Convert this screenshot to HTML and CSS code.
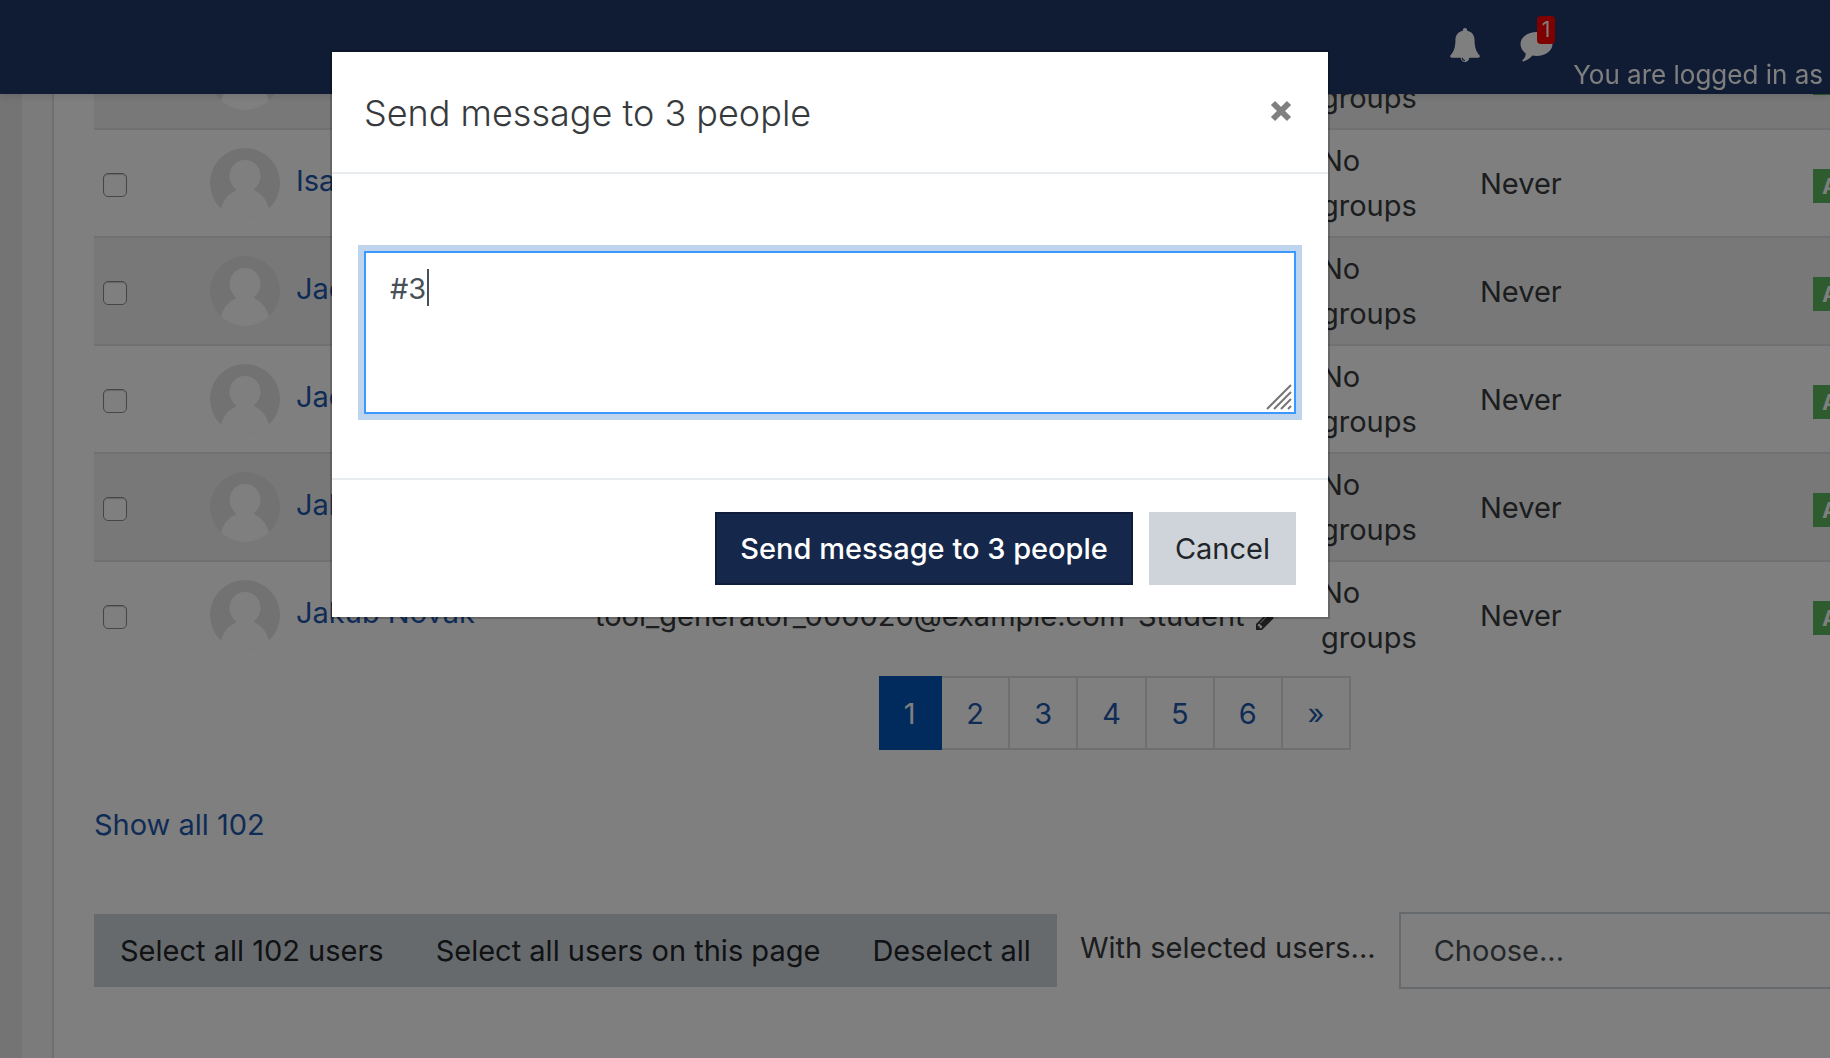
FILE: index.html
```html
<!DOCTYPE html>
<html lang="en">
<head>
    <meta charset="UTF-8">
    <meta name="viewport" content="width=device-width, initial-scale=1.0">
    <title>Participants</title>
    <link rel="stylesheet" href="styles.css">
</head>
<body>

<svg class="sprite" aria-hidden="true">
    <symbol id="avatar" viewBox="0 0 70 70">
        <clipPath id="round"><circle cx="35" cy="35" r="35"/></clipPath>
        <g clip-path="url(#round)">
            <rect width="70" height="70" fill="#e4e4e4"/>
            <path d="M35 12c9 0 15.500 7 15.500 16 0 6-3 10-7 14 9 4 14 11 16 21l-2 7H12l-1.500-7c2-10 7-17 16-21-4-4-7-8-7-14 0-9 6.500-16 15.500-16z" fill="#fff"/>
        </g>
    </symbol>
    <symbol id="pencil" viewBox="0 0 1536 1536">
        <path d="M363 1408l91-91-235-235-91 91v107h128v128zM886 480q0-22-22-22-10 0-17 7l-542 542q-7 7-7 17 0 22 22 22 10 0 17-7l542-542q7-7 7-17zM832 288l416 416-832 832H0v-416zM1515 384q0 53-37 90l-166 166-416-416 166-165q36-38 90-38 53 0 91 38l235 234q37 39 37 91z"/>
    </symbol>
</svg>

<header class="navbar">
    <a href="#" class="nav-icon" aria-label="Notifications">
        <svg class="bell" viewBox="0 0 28 32"><path d="M14 0c1.300 0 2 .8 2 2v.7c4.500.8 7 4.300 7 8.800 0 7.500 2 11.500 5 14.500 0 1.300-.9 2-2 2h-8c0 2.200-1.800 4-4 4s-4-1.800-4-4H2c-1.100 0-2-.7-2-2 3-3 5-7 5-14.500 0-4.500 2.500-8 7-8.800V2c0-1.200.7-2 2-2z" fill="#fff"/><path d="M11.500 28c0 1.400 1.100 2.500 2.500 2.500" fill="none" stroke="#203866" stroke-width="1"/></svg>
    </a>
    <a href="#" class="nav-icon" aria-label="Messages">
        <svg class="comment" viewBox="0 0 32 30"><path d="M16 0c8.800 0 16 5.400 16 12s-7.200 12-16 12c-1.400 0-2.700-.1-4-.4C9.500 26.500 6 28.800 2.800 29.500c-.9.200-1.300-.8-.7-1.400C4 26.300 5 25 5.200 21.500 2 19.200 0 15.800 0 12 0 5.400 7.200 0 16 0z" fill="#fff"/></svg>
        <span class="count">1</span>
    </a>
    <span class="login">You are logged in as</span>
</header>

<main class="page">
    <section class="participants">
        <table>
            <colgroup>
                <col class="col-select"><col class="col-name"><col class="col-email"><col class="col-role"><col class="col-groups"><col class="col-access"><col>
            </colgroup>
            <tbody>
                <tr>
                    <td><input type="checkbox" aria-label="Select Isaac Jones"></td>
                    <td><a href="#" class="user"><svg class="avatar"><use href="#avatar"/></svg><span>Isaac Jones</span></a></td>
                    <td>tool_generator_000016@example.com</td>
                    <td>Student <svg class="pencil"><use href="#pencil"/></svg></td>
                    <td>No<br>groups</td>
                    <td>Never</td>
                    <td><span class="status">Active</span></td>
                </tr>
                <tr>
                    <td><input type="checkbox" aria-label="Select Isabel Novak"></td>
                    <td><a href="#" class="user"><svg class="avatar"><use href="#avatar"/></svg><span>Isabel Novak</span></a></td>
                    <td>tool_generator_000017@example.com</td>
                    <td>Student <svg class="pencil"><use href="#pencil"/></svg></td>
                    <td>No<br>groups</td>
                    <td>Never</td>
                    <td><span class="status">Active</span></td>
                </tr>
                <tr>
                    <td><input type="checkbox" aria-label="Select Jacob Smith"></td>
                    <td><a href="#" class="user"><svg class="avatar"><use href="#avatar"/></svg><span>Jacob Smith</span></a></td>
                    <td>tool_generator_000018@example.com</td>
                    <td>Student <svg class="pencil"><use href="#pencil"/></svg></td>
                    <td>No<br>groups</td>
                    <td>Never</td>
                    <td><span class="status">Active</span></td>
                </tr>
                <tr>
                    <td><input type="checkbox" aria-label="Select Jacob Wilson"></td>
                    <td><a href="#" class="user"><svg class="avatar"><use href="#avatar"/></svg><span>Jacob Wilson</span></a></td>
                    <td>tool_generator_000019@example.com</td>
                    <td>Student <svg class="pencil"><use href="#pencil"/></svg></td>
                    <td>No<br>groups</td>
                    <td>Never</td>
                    <td><span class="status">Active</span></td>
                </tr>
                <tr>
                    <td><input type="checkbox" aria-label="Select Jakub Horak"></td>
                    <td><a href="#" class="user"><svg class="avatar"><use href="#avatar"/></svg><span>Jakub Horak</span></a></td>
                    <td>tool_generator_000021@example.com</td>
                    <td>Student <svg class="pencil"><use href="#pencil"/></svg></td>
                    <td>No<br>groups</td>
                    <td>Never</td>
                    <td><span class="status">Active</span></td>
                </tr>
                <tr>
                    <td><input type="checkbox" aria-label="Select Jakub Novak"></td>
                    <td><a href="#" class="user"><svg class="avatar"><use href="#avatar"/></svg><span>Jakub Novak</span></a></td>
                    <td>tool_generator_000020@example.com</td>
                    <td>Student <svg class="pencil"><use href="#pencil"/></svg></td>
                    <td>No<br>groups</td>
                    <td>Never</td>
                    <td><span class="status">Active</span></td>
                </tr>
            </tbody>
        </table>

        <nav class="pagination" aria-label="Page">
            <a href="#" class="active">1</a>
            <a href="#">2</a>
            <a href="#">3</a>
            <a href="#">4</a>
            <a href="#">5</a>
            <a href="#">6</a>
            <a href="#">»</a>
        </nav>

        <a href="#" class="show-all">Show all 102</a>

        <div class="actions">
            <div class="btn-group">
                <button type="button" class="btn btn-secondary">Select all 102 users</button>
                <button type="button" class="btn btn-secondary">Select all users on this page</button>
                <button type="button" class="btn btn-secondary">Deselect all</button>
            </div>
            <label for="bulkAction">With selected users...</label>
            <select id="bulkAction">
                <option>Choose...</option>
            </select>
        </div>
    </section>
</main>

<div class="backdrop">
    <div class="modal" role="dialog" aria-labelledby="modalTitle">
        <div class="modal-header">
            <h2 id="modalTitle">Send message to 3 people</h2>
            <button type="button" class="close" aria-label="Close">
                <svg viewBox="0 0 22 22"><path d="M3 3l16 16M19 3L3 19"/></svg>
            </button>
        </div>
        <div class="modal-body">
            <div class="message">
                <textarea aria-label="Message">#3</textarea>
                <span class="caret"></span>
                <svg class="grip" viewBox="0 0 26 26"><path d="M1 25L25 1M8 25L25 8M15 25l10-10M22 25l3-3"/></svg>
            </div>
        </div>
        <div class="modal-footer">
            <button type="button" class="btn btn-primary">Send message to 3 people</button>
            <button type="button" class="btn btn-secondary">Cancel</button>
        </div>
    </div>
</div>

</body>
</html>
```
FILE: styles.css
```css
* {
    box-sizing: border-box;
}
body {
    margin: 0;
    height: 100vh;
    overflow: hidden;
    font-family: Inter, "Liberation Sans", sans-serif;
    font-size: 29px;
    line-height: 45px;
    color: #373a3c;
    background: #e8e8e8;
}
a {
    color: #1f58ac;
    text-decoration: none;
}
button, select, textarea {
    font: inherit;
    margin: 0;
    border-radius: 0;
}
.sprite {
    position: absolute;
    width: 0;
    height: 0;
}

/* top bar */
.navbar {
    position: fixed;
    top: 0;
    left: 0;
    right: 0;
    z-index: 1;
    height: 94px;
    padding: 0 7px 7px 0;
    display: flex;
    justify-content: flex-end;
    background: #203866;
    color: #fff;
    box-shadow: 0 2px 8px rgba(0,0,0,0.12);
}
.nav-icon {
    position: relative;
    height: 90px;
    display: flex;
    align-items: center;
    margin-right: 40px;
}
.nav-icon + .nav-icon {
    margin-right: 20px;
}
.nav-icon svg {
    display: block;
}
.bell {
    width: 30px;
    height: 34px;
}
.comment {
    width: 33px;
    height: 30px;
    margin-top: 4px;
}
.count {
    position: absolute;
    top: 16px;
    right: -2px;
    padding: 0 5px;
    font-size: 21px;
    line-height: 28px;
    color: #fff;
    background: red;
    border-radius: 4px;
}
.login {
    align-self: flex-end;
    font-size: 26px;
    line-height: 24px;
}

/* page */
.page {
    min-height: 100vh;
    margin-left: 22px;
    padding-left: 30px;
    background: #f7f7f7;
}
.participants {
    min-height: 100vh;
    padding: 20px 0 0 40px;
    border-left: 2px solid #dfdfdf;
    background: #fff;
}
table {
    width: 2042px;
    table-layout: fixed;
    border-collapse: separate;
    border-spacing: 0;
}
.col-select { width: 108px; }
.col-name { width: 385px; }
.col-email { width: 543px; }
.col-role { width: 183px; }
.col-groups { width: 159px; }
.col-access { width: 333px; }
td {
    height: 108px;
    padding: 8px;
    border-top: 2px solid #dee0e2;
    white-space: nowrap;
    vertical-align: middle;
}
tr:nth-child(odd) {
    background: #f1f1f1;
}
tr:nth-child(even) {
    background: #fff;
}
input[type="checkbox"] {
    appearance: none;
    display: block;
    width: 24px;
    height: 24px;
    margin: 4px 0 0 1px;
    border: 1px solid #8c8c8c;
    border-radius: 5px;
    background: #fff;
    box-shadow: inset 0 1px 1px rgba(0,0,0,0.2);
}
.user {
    display: flex;
    align-items: center;
    gap: 16px;
}
.user span {
    padding-bottom: 5px;
}
.avatar {
    width: 70px;
    height: 70px;
}
.pencil {
    width: 22px;
    height: 22px;
    margin: 0 0 -4px 3px;
    fill: #373a3c;
}
.status {
    display: inline-block;
    padding: 0 9px;
    font-size: 22px;
    font-weight: 700;
    line-height: 34px;
    color: #fff;
    background: #5cb85c;
    vertical-align: middle;
}
.pagination {
    display: flex;
    justify-content: center;
    width: 2042px;
    margin-top: 8px;
}
.pagination a {
    min-width: 68px;
    padding: 13px 24px 12px;
    line-height: 45px;
    text-align: center;
    border: 2px solid #dfdfdf;
    border-left: 0;
}
.pagination .active {
    min-width: 63px;
    color: #fff;
    background: #0056b8;
    border-color: #0056b8;
}
.show-all {
    display: block;
    width: max-content;
    margin: 52px 0 65px;
}
.actions {
    display: flex;
    align-items: center;
}
.btn-group {
    display: flex;
}
.btn {
    height: 73px;
    padding: 0 24px;
    border: 2px solid #ced4da;
    white-space: nowrap;
    cursor: pointer;
}
.btn-secondary {
    color: #212529;
    background: #ced4da;
}
.btn-primary {
    padding: 0 23px;
    color: #fff;
    font-weight: 500;
    background: #15274a;
    border-color: #0f1d3b;
}
.actions label {
    margin: 0 23px 6px;
    white-space: nowrap;
}
.actions select {
    appearance: none;
    flex: 1 0 auto;
    height: 77px;
    padding: 0 33px;
    color: #495057;
    background: #fff;
    border: 2px solid #ced4da;
    border-right: 0;
}

/* message dialog */
.backdrop {
    position: fixed;
    inset: 0;
    z-index: 2;
    padding: 50px 170px 0 0;
    background: rgba(0,0,0,0.5);
}
.modal {
    width: 100%;
    max-width: 1000px;
    margin: 0 auto;
    background: #fff;
    background-clip: padding-box;
    border: 2px solid rgba(0,0,0,0.2);
}
.modal-header {
    display: flex;
    justify-content: space-between;
    align-items: center;
    height: 122px;
    padding: 2px 32px 0;
    border-bottom: 2px solid #e9ecef;
}
.modal-header h2 {
    margin: 0;
    font-size: 36px;
    font-weight: 300;
}
.close {
    display: flex;
    padding: 0 4px 4px;
    border: 0;
    background: none;
    cursor: pointer;
}
.close svg {
    width: 22px;
    height: 22px;
    fill: none;
    stroke: #808080;
    stroke-width: 6;
}
.modal-body {
    padding: 77px 32px 64px;
}
.message {
    position: relative;
}
textarea {
    display: block;
    width: 100%;
    height: 163px;
    padding: 13px 24px;
    color: #495057;
    background: #fff;
    border: 2px solid #3b98ff;
    outline: 0;
    box-shadow: 0 0 0 6px #bfd5ed;
    resize: none;
}
.caret {
    position: absolute;
    top: 18px;
    left: 63px;
    width: 2px;
    height: 37px;
    background: #495057;
}
.grip {
    position: absolute;
    right: 4px;
    bottom: 4px;
    width: 26px;
    height: 26px;
    fill: none;
    stroke: #757575;
    stroke-width: 2;
}
.modal-footer {
    display: flex;
    justify-content: flex-end;
    gap: 16px;
    padding: 32px;
    border-top: 2px solid #e9ecef;
}
```
